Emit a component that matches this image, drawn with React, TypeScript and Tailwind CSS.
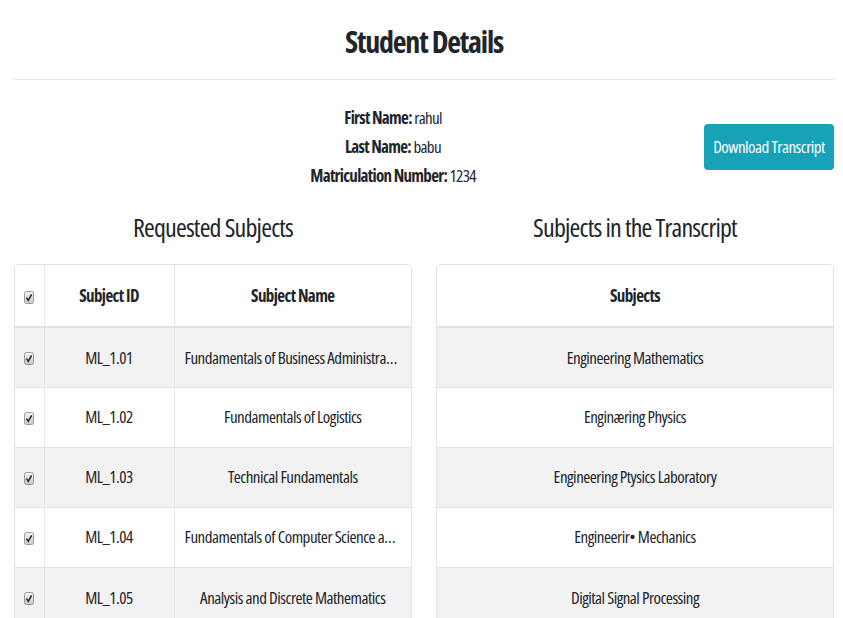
import React from "react";

const requested = [
  { id: "ML_1.01", name: "Fundamentals of Business Administration" },
  { id: "ML_1.02", name: "Fundamentals of Logistics" },
  { id: "ML_1.03", name: "Technical Fundamentals" },
  { id: "ML_1.04", name: "Fundamentals of Computer Science and Programming" },
  { id: "ML_1.05", name: "Analysis and Discrete Mathematics" },
];

const transcript = [
  "Engineering Mathematics",
  "Enginæring Physics",
  "Engineering Ptysics Laboratory",
  "Engineerir• Mechanics",
  "Digital Signal Processing",
];

const Check: React.FC = () => (
  <svg width="10" height="13" viewBox="0 0 10 13" className="inline-block">
    <defs>
      <linearGradient id="cbg" x1="0" y1="0" x2="0" y2="1">
        <stop offset="0" stopColor="#f4f4f4" />
        <stop offset="1" stopColor="#c9c9c9" />
      </linearGradient>
    </defs>
    <rect x="0.5" y="0.5" width="9" height="12" rx="2" fill="url(#cbg)" stroke="#9b9b9b" />
    <path d="M2.4 6.6 L4.3 9.3 L7.6 3.4" fill="none" stroke="#2b2b2b" strokeWidth="1.6" />
  </svg>
);

export default function App() {
  return (
    <div className="h-[618px] overflow-hidden bg-white pl-[14px] pr-[9px] text-[#212529] font-['Open_Sans',sans-serif] font-stretch-[75%]">
      <h2 className="pt-[23px] pb-[18px] text-center text-[30px] leading-[38px] font-bold tracking-[-1.2px]">
        Student Details
      </h2>
      <hr className="border-0 border-t border-[#e6e6e6]" />

      <div className="mt-[23px] flex items-center">
        <div className="flex-1 pl-[68px] text-center text-[17px] leading-[29px] tracking-[-0.7px]">
          <div>
            <span className="font-bold">First Name:</span> rahul
          </div>
          <div>
            <span className="font-bold">Last Name:</span> babu
          </div>
          <div>
            <span className="font-bold">Matriculation Number:</span> 1234
          </div>
        </div>
        <button className="h-[46px] w-[130px] whitespace-nowrap rounded-[4px] bg-[#17a2b8] text-[17px] tracking-[-0.5px] text-white">
          Download Transcript
        </button>
      </div>

      <div className="mt-[20px] grid grid-cols-2 gap-[24px]">
        <div>
          <h3 className="mb-[20px] text-center text-[26px] leading-[34px] tracking-[-0.8px]">
            Requested Subjects
          </h3>
          <div className="overflow-hidden rounded-[5px] border border-[#e3e3e3]">
            <table className="w-full table-fixed border-collapse text-[17px] tracking-[-0.5px]">
              <colgroup>
                <col className="w-[29px]" />
                <col className="w-[130px]" />
                <col />
              </colgroup>
              <thead>
                <tr className="h-[62px] border-b-2 border-[#dee2e6]">
                  <th className="text-center align-middle">
                    <Check />
                  </th>
                  <th className="border-l border-[#e6e6e6] font-bold tracking-[-0.6px]">Subject ID</th>
                  <th className="border-l border-[#e6e6e6] font-bold tracking-[-0.6px]">Subject Name</th>
                </tr>
              </thead>
              <tbody>
                {requested.map((r, i) => (
                  <tr
                    key={r.id}
                    className={`h-[60px] border-t border-[#e3e3e3] ${i % 2 === 0 ? "bg-[#f2f2f2]" : "bg-white"}`}
                  >
                    <td className="text-center align-middle">
                      <Check />
                    </td>
                    <td className="border-l border-[#e6e6e6] text-center">{r.id}</td>
                    <td className="border-l border-[#e6e6e6] px-[10px] text-center">
                      <div className="truncate">{r.name}</div>
                    </td>
                  </tr>
                ))}
              </tbody>
            </table>
          </div>
        </div>

        <div>
          <h3 className="mb-[20px] text-center text-[26px] leading-[34px] tracking-[-0.8px]">
            Subjects in the Transcript
          </h3>
          <div className="overflow-hidden rounded-[5px] border border-[#e3e3e3]">
            <table className="w-full border-collapse text-[17px] tracking-[-0.5px]">
              <thead>
                <tr className="h-[62px] border-b-2 border-[#dee2e6]">
                  <th className="font-bold tracking-[-0.6px]">Subjects</th>
                </tr>
              </thead>
              <tbody>
                {transcript.map((s, i) => (
                  <tr
                    key={s}
                    className={`h-[60px] border-t border-[#e3e3e3] ${i % 2 === 0 ? "bg-[#f2f2f2]" : "bg-white"}`}
                  >
                    <td className="text-center">{s}</td>
                  </tr>
                ))}
              </tbody>
            </table>
          </div>
        </div>
      </div>
    </div>
  );
}
